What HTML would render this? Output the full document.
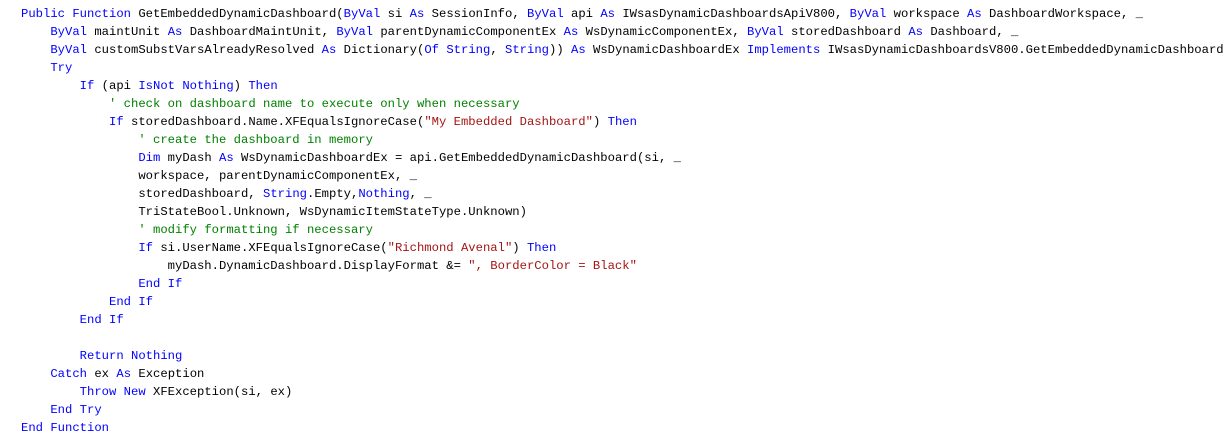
<!DOCTYPE html>
<html><head><style>
html,body{margin:0;padding:0;background:#fff;width:1232px;height:442px;overflow:hidden}
pre{margin:0;position:absolute;left:21px;top:5px;font-family:"Liberation Mono",monospace;font-size:12.22px;line-height:18px;color:#000;letter-spacing:0}
.k{color:#0000ff}.s{color:#a31515}.c{color:#008000}
</style></head><body>
<pre><span class="k">Public Function</span> GetEmbeddedDynamicDashboard(<span class="k">ByVal</span> si <span class="k">As</span> SessionInfo, <span class="k">ByVal</span> api <span class="k">As</span> IWsasDynamicDashboardsApiV800, <span class="k">ByVal</span> workspace <span class="k">As</span> DashboardWorkspace, _
    <span class="k">ByVal</span> maintUnit <span class="k">As</span> DashboardMaintUnit, <span class="k">ByVal</span> parentDynamicComponentEx <span class="k">As</span> WsDynamicComponentEx, <span class="k">ByVal</span> storedDashboard <span class="k">As</span> Dashboard, _
    <span class="k">ByVal</span> customSubstVarsAlreadyResolved <span class="k">As</span> Dictionary(<span class="k">Of String</span>, <span class="k">String</span>)) <span class="k">As</span> WsDynamicDashboardEx <span class="k">Implements</span> IWsasDynamicDashboardsV800.GetEmbeddedDynamicDashboard
    <span class="k">Try</span>
        <span class="k">If</span> (api <span class="k">IsNot Nothing</span>) <span class="k">Then</span>
            <span class="c">' check on dashboard name to execute only when necessary</span>
            <span class="k">If</span> storedDashboard.Name.XFEqualsIgnoreCase(<span class="s">"My Embedded Dashboard"</span>) <span class="k">Then</span>
                <span class="c">' create the dashboard in memory</span>
                <span class="k">Dim</span> myDash <span class="k">As</span> WsDynamicDashboardEx = api.GetEmbeddedDynamicDashboard(si, _
                workspace, parentDynamicComponentEx, _
                storedDashboard, <span class="k">String</span>.Empty,<span class="k">Nothing</span>, _
                TriStateBool.Unknown, WsDynamicItemStateType.Unknown)
                <span class="c">' modify formatting if necessary</span>
                <span class="k">If</span> si.UserName.XFEqualsIgnoreCase(<span class="s">"Richmond Avenal"</span>) <span class="k">Then</span>
                    myDash.DynamicDashboard.DisplayFormat &amp;= <span class="s">", BorderColor = Black"</span>
                <span class="k">End If</span>
            <span class="k">End If</span>
        <span class="k">End If</span>

        <span class="k">Return Nothing</span>
    <span class="k">Catch</span> ex <span class="k">As</span> Exception
        <span class="k">Throw New</span> XFException(si, ex)
    <span class="k">End Try</span>
<span class="k">End Function</span></pre>
</body></html>
